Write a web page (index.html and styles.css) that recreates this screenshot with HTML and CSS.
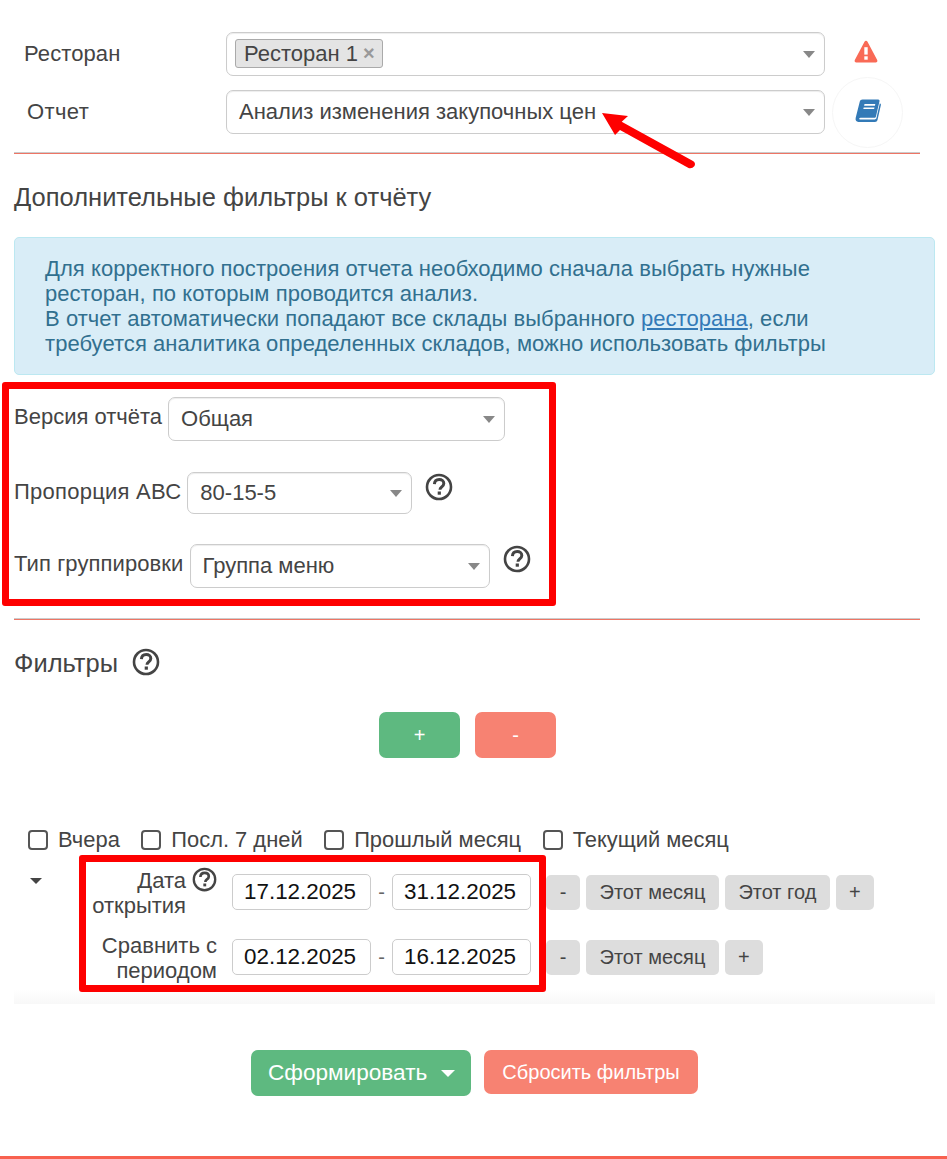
FILE: index.html
```html
<!DOCTYPE html>
<html lang="ru">
<head>
  <meta charset="UTF-8">
  <title>Анализ изменения закупочных цен</title>
  <link rel="stylesheet" href="styles.css">
</head>
<body>
  <svg width="0" height="0" class="defs">
    <symbol id="help" viewBox="0 0 28 28">
      <circle cx="14" cy="14" r="12" fill="none" stroke="currentColor" stroke-width="2.6"/>
      <path d="M9.4 11.200c.2-3 2.100-4.600 4.800-4.600 2.700 0 4.600 1.600 4.600 3.900 0 1.900-1.100 2.800-2.400 3.700-1 .7-1.400 1.200-1.400 2.500" fill="none" stroke="currentColor" stroke-width="3"/>
      <rect x="12.700" y="18.500" width="3.200" height="3.200" fill="currentColor"/>
    </symbol>
  </svg>

  <main class="page">
    <section class="report-head">
      <div class="head-row">
        <label class="head-label">Ресторан</label>
        <div class="select select-head select-tags">
          <span class="tag">Ресторан 1 <b class="tag-x">×</b></span>
          <i class="caret"></i>
        </div>
        <span class="head-icon head-icon-warn">
          <svg width="24" height="24" viewBox="0 0 24 24"><path d="M12 .8c.7 0 1.200.4 1.500 1l9.700 18.300c.6 1.200-.2 2.500-1.500 2.500H2.300C1 22.600.2 21.300.8 20.100L10.500 1.800c.3-.6.800-1 1.500-1z" fill="#f96a56"/><rect x="10.300" y="7.200" width="3.400" height="7.400" fill="#fff"/><rect x="10.300" y="16.300" width="3.400" height="3.400" fill="#fff"/></svg>
        </span>
      </div>
      <div class="head-row">
        <label class="head-label head-label-report">Отчет</label>
        <div class="select select-head">
          <span class="select-text">Анализ изменения закупочных цен</span>
          <i class="caret"></i>
        </div>
        <span class="head-icon head-icon-round">
          <svg width="26" height="24" viewBox="0 0 26 24"><path d="M7.500.5h15.700c1 0 1.500.8 1.300 1.700l-3.500 15c-.2 1-.8 1.500-1.700 1.500H5.600c-1.500 0-2 1.600-.5 1.700h14.600c.9 0 1.400-.5 1.700-1.200l3.400-15 .7.500c.4.300.5.800.4 1.300l-3.400 15c-.3 1.200-1.200 1.900-2.500 1.900H4.200C1.600 23.400 0 21.400.7 18.800L4.800 2.600C5.100 1.300 6.100.5 7.500.5z" fill="#337ab7"/><path d="M9.500 5h10.800l-.4 1.700H9.100zM8.700 8.400h10.800l-.4 1.700H8.300z" fill="#fff"/></svg>
        </span>
      </div>
    </section>

    <hr class="divider">
    <h2 class="section-title">Дополнительные фильтры к отчёту</h2>

    <div class="info-box">
      Для корректного построения отчета необходимо сначала выбрать нужные<br>
      ресторан, по которым проводится анализ.<br>
      В отчет автоматически попадают все склады выбранного <a href="#">ресторана</a>, если<br>
      требуется аналитика определенных складов, можно использовать фильтры
    </div>

    <section class="options">
      <div class="option-row option-row-version">
        <label>Версия отчёта</label>
        <div class="select select-version"><span class="select-text">Общая</span><i class="caret"></i></div>
      </div>
      <div class="option-row option-row-abc">
        <label>Пропорция АВС</label>
        <div class="select select-abc"><span class="select-text">80-15-5</span><i class="caret"></i></div>
        <svg class="help help-option"><use href="#help"/></svg>
      </div>
      <div class="option-row option-row-group">
        <label>Тип группировки</label>
        <div class="select select-group"><span class="select-text">Группа меню</span><i class="caret"></i></div>
        <svg class="help help-option"><use href="#help"/></svg>
      </div>
    </section>

    <hr class="divider divider-filters">
    <h2 class="section-title filters-title">Фильтры <svg class="help help-title"><use href="#help"/></svg></h2>

    <div class="filter-actions">
      <button class="btn btn-green btn-square">+</button>
      <button class="btn btn-salmon btn-square">-</button>
    </div>

    <div class="quick-dates">
      <label class="check"><i class="checkbox"></i>Вчера</label>
      <label class="check"><i class="checkbox"></i>Посл. 7 дней</label>
      <label class="check"><i class="checkbox"></i>Прошлый месяц</label>
      <label class="check"><i class="checkbox"></i>Текущий месяц</label>
    </div>

    <section class="date-filters">
      <i class="date-toggle"></i>
      <div class="date-rows">
        <div class="date-row">
          <div class="date-label"><svg class="help help-date"><use href="#help"/></svg>Дата открытия</div>
          <span class="date-input">17.12.2025</span>
          <span class="date-sep">-</span>
          <span class="date-input">31.12.2025</span>
          <button class="chip chip-minus">-</button>
          <button class="chip">Этот месяц</button>
          <button class="chip">Этот год</button>
          <button class="chip chip-plus">+</button>
        </div>
        <div class="date-row">
          <div class="date-label">Сравнить с<br>периодом</div>
          <span class="date-input">02.12.2025</span>
          <span class="date-sep">-</span>
          <span class="date-input">16.12.2025</span>
          <button class="chip chip-minus">-</button>
          <button class="chip">Этот месяц</button>
          <button class="chip chip-plus">+</button>
        </div>
      </div>
    </section>

    <div class="main-actions">
      <button class="btn btn-green btn-build">Сформировать <i class="caret caret-white"></i></button>
      <button class="btn btn-salmon btn-reset">Сбросить фильтры</button>
    </div>
  </main>
  <div class="bottom-line"></div>

  <!-- annotations on top of the screenshot -->
  <div class="mark mark-options"></div>
  <div class="mark mark-dates"></div>
  <svg class="mark-arrow" width="100" height="70" viewBox="0 0 100 70">
    <path d="M1 0 L27 3 L20.700 8.700 L92 48 Q95 50 93.500 53 Q91 56 87.500 55 L19 17 L14 22 Z" fill="#fe0000"/>
  </svg>
</body>
</html>
```

FILE: styles.css
```css
* {
  box-sizing: border-box;
}

body {
  margin: 0;
  background: #fff;
  color: #444;
  font-family: "Liberation Sans", Arial, sans-serif;
  font-size: 22px;
  position: relative;
  height: 1159px;
  overflow: hidden;
}

.defs {
  position: absolute;
}

.page {
  padding: 32px 12px 0 14px;
}

.head-row {
  display: flex;
  align-items: center;
  height: 43px;
  margin-bottom: 15px;
}

.head-row + .head-row {
  margin-bottom: 0;
}

.head-label {
  width: 212px;
  padding-left: 10px;
  font-size: 22px;
  letter-spacing: .1px;
}

.head-label-report {
  padding-left: 13px;
  letter-spacing: .4px;
}

.select {
  position: relative;
  display: flex;
  align-items: center;
  height: 44px;
  background: #fff;
  border: 1px solid #ccc;
  border-radius: 7px;
  box-shadow: inset 0 1px 1px rgba(0, 0, 0, .075);
  font-size: 22px;
  padding-left: 12px;
}

.select-head {
  width: 599px;
}

.select-tags {
  padding-left: 8px;
}

.tag {
  display: flex;
  align-items: center;
  gap: 5px;
  height: 29px;
  padding: 0 7px 0 8px;
  background: #e4e4e4;
  border: 1px solid #aaa;
  border-radius: 3px;
}

.tag-x {
  color: #999;
  font-size: 20px;
}

.caret {
  position: absolute;
  right: 9px;
  top: 50%;
  margin-top: -3px;
  width: 0;
  height: 0;
  border-left: 6px solid transparent;
  border-right: 6px solid transparent;
  border-top: 7px solid #888;
}

.head-icon {
  display: flex;
  align-items: center;
  justify-content: center;
  width: 71px;
  margin-left: 7px;
  height: 71px;
  margin-top: -9px;
  margin-bottom: -9px;
}

.head-icon-warn {
  padding: 0 4px 4px 0;
}

.head-icon-round {
  margin-top: -8px;
  margin-bottom: -10px;
  padding-bottom: 3px;
  border: 1px solid #f6f6f6;
  border-radius: 50%;
}

.divider {
  margin: 19px 15px 0 0;
  border: 0;
  height: 2px;
  background: linear-gradient(to bottom, #ccc 50%, #ee7565 50%);
}

.section-title {
  margin: 0;
  font-size: 25.5px;
  font-weight: 400;
  line-height: 30px;
  padding-top: 28px;
}

.info-box {
  margin-top: 25px;
  height: 138px;
  padding: 18px 30px;
  width: 921px;
  background: #d9edf7;
  border: 1px solid #bce8f1;
  border-radius: 5px;
  color: #31708f;
  font-size: 22px;
  letter-spacing: .05px;
  line-height: 25px;
}

.info-box a {
  color: #337ab7;
  text-decoration: underline;
}

.options {
  padding-top: 22px;
}

.option-row {
  display: flex;
  align-items: flex-start;
  gap: 6px;
}

.option-row label {
  padding-top: 7px;
  letter-spacing: .1px;
}

.option-row-version label {
  letter-spacing: 0;
}

.option-row-abc {
  margin-top: 31px;
}

.option-row-abc label {
  letter-spacing: .25px;
}

.option-row-abc .select {
  height: 42px;
}

.option-row-group {
  margin-top: 30px;
}

.select-version {
  width: 337px;
}

.select-abc {
  width: 225px;
}

.select-group {
  width: 300px;
}

.help {
  width: 28px;
  height: 28px;
  color: #444;
}

.help-option {
  margin: 1px 0 0 7px;
}

.divider-filters {
  margin-top: 30px;
}

.filters-title {
  display: flex;
  align-items: center;
  gap: 14px;
}

.help-title {
  margin-top: -2px;
}

.filter-actions {
  display: flex;
  justify-content: center;
  gap: 15px;
  margin-top: 34px;
  padding-right: 14px;
}

.btn {
  border: 0;
  border-radius: 7px;
  color: #fff;
  font-family: inherit;
}

.btn-green {
  background: #5eb980;
}

.btn-salmon {
  background: #f78272;
}

.btn-square {
  width: 81px;
  height: 46px;
  font-size: 20px;
}

.quick-dates {
  display: flex;
  gap: 21.5px;
  margin-top: 68px;
  padding-left: 14px;
  height: 28px;
  font-size: 21.9px;
}

.check {
  display: flex;
  align-items: center;
  gap: 10px;
}

.checkbox {
  width: 20px;
  height: 20px;
  border: 2px solid #555;
  border-radius: 4px;
}

.date-filters {
  position: relative;
  display: flex;
  height: 150px;
  background: linear-gradient(to bottom, #fff 135px, #f8f8f8 150px);
  padding-left: 68px;
  width: 921px;
}

.date-toggle {
  position: absolute;
  left: 16px;
  top: 24px;
  width: 0;
  height: 0;
  border-left: 6px solid transparent;
  border-right: 6px solid transparent;
  border-top: 6px solid #444;
}

.date-rows {
  padding-top: 13px;
}

.date-row {
  display: flex;
  align-items: center;
  height: 50px;
  margin-bottom: 15px;
}

.date-label {
  width: 150px;
  padding: 2px 15px 0 0;
  text-align: right;
  line-height: 25px;
}

.help-date {
  float: right;
  width: 25px;
  height: 25px;
  margin: -1px 0 25px 6px;
}

.date-input {
  display: flex;
  align-items: center;
  width: 139px;
  height: 36px;
  padding-left: 11px;
  border: 1px solid #ccc;
  border-radius: 5px;
  color: #111;
  font-size: 22.4px;
  background: #fff;
}

.date-sep {
  width: 21px;
  text-align: center;
  color: #666;
  font-size: 20px;
}

.chip {
  height: 35px;
  margin-left: 6px;
  padding: 0 13.5px;
  border: 0;
  border-radius: 5px;
  background: #ddd;
  color: #444;
  font-family: inherit;
  font-size: 20px;
}

.chip-minus {
  margin-left: 15px;
  padding: 0;
  width: 34px;
}

.chip-plus {
  padding: 0;
  width: 38px;
}

.main-actions {
  display: flex;
  justify-content: center;
  align-items: flex-start;
  gap: 13px;
  margin-top: 46px;
}

.btn-build {
  position: relative;
  width: 220px;
  height: 46px;
  font-size: 22.6px;
  text-align: left;
  padding-left: 17px;
}

.caret-white {
  border-top-color: #fff;
  right: 16px;
  border-left-width: 7px;
  border-right-width: 7px;
}

.btn-reset {
  width: 214px;
  height: 44px;
  font-size: 20px;
}

.bottom-line {
  position: absolute;
  left: 0;
  right: 0;
  bottom: 0;
  height: 3px;
  background: #f8614f;
}

.mark {
  position: absolute;
  border: 7px solid #fe0000;
  border-radius: 3px;
}

.mark-options {
  left: 2px;
  top: 382px;
  width: 554px;
  height: 224px;
}

.mark-dates {
  left: 79px;
  top: 855px;
  width: 467px;
  height: 137px;
}

.mark-arrow {
  position: absolute;
  left: 601px;
  top: 113px;
}
```
